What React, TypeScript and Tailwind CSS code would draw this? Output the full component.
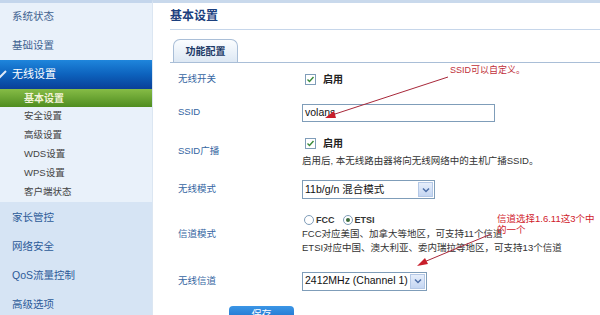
const SUB = ["安全设置", "高级设置", "WDS设置", "WPS设置", "客户端状态"];
const LOWER = ["家长管控", "网络安全", "QoS流量控制", "高级选项"];

function CheckBox() {
  return (
    <span className="flex h-[11px] w-[11px] items-center justify-center border border-[#7f9db9] bg-white">
      <svg width="9" height="9" viewBox="0 0 9 9" aria-hidden="true">
        <path d="M1.5 4.5l2 2 4-4.5" stroke="#3a8a3a" strokeWidth="1.4" fill="none" />
      </svg>
    </span>
  );
}

function Radio({ on }: { on: boolean }) {
  return (
    <span className="flex h-[10px] w-[10px] items-center justify-center rounded-full border border-[#7f9db9] bg-white">
      {on && <span className="h-[4px] w-[4px] rounded-full bg-[#3a6a3a]" />}
    </span>
  );
}

function Select({ label, width }: { label: string; width: string }) {
  return (
    <div className={`flex h-[19px] items-center justify-between overflow-hidden border border-[#7f9db9] bg-white pl-[2px] pr-[1px] ${width}`}>
      <span className="whitespace-nowrap text-[10.5px] text-[#111]">{label}</span>
      <span className="flex h-[15px] w-[15px] shrink-0 items-center justify-center border border-[#b4c8e6] bg-gradient-to-b from-[#e6eefb] to-[#c4d6f2]">
        <svg width="8" height="6" viewBox="0 0 8 6" aria-hidden="true">
          <path d="M1 1.5l3 3 3-3" stroke="#4d6fa8" strokeWidth="1.5" fill="none" />
        </svg>
      </span>
    </div>
  );
}

function Row({ label, h, children }: { label: string; h: string; children: React.ReactNode }) {
  return (
    <div className={`flex shrink-0 items-center ${h}`}>
      <span className="w-[124px] shrink-0 text-[9.5px] text-[#3566a2]">{label}</span>
      <div>{children}</div>
    </div>
  );
}

export default function App() {
  return (
    <div className="relative flex h-[315px] w-[600px] overflow-hidden bg-white font-['Liberation_Sans','Noto_Sans_CJK_SC',sans-serif]">
      {/* sidebar */}
      <aside className="flex w-[152px] shrink-0 flex-col border-t-[3px] border-[#c4d6ec] bg-[#e9f1fa]">
        <div className="flex h-[28px] shrink-0 items-center pl-[12px] text-[10.5px] text-[#3f6290]">系统状态</div>
        <div className="flex h-[29px] shrink-0 items-center pl-[12px] text-[10.5px] text-[#3f6290]">基础设置</div>
        <div className="flex h-[29px] shrink-0 items-center bg-gradient-to-b from-[#1f86dc] via-[#0d62bd] to-[#0a3f98] text-[11px] text-white">
          <svg width="12" height="10" viewBox="0 0 12 10" aria-hidden="true" className="-ml-[5px] mr-[5px]">
            <path d="M1 5l3 3 7-7" stroke="#dfe9f7" strokeWidth="2" fill="none" />
          </svg>
          无线设置
        </div>
        <div className="flex h-[18px] shrink-0 items-center bg-gradient-to-b from-[#86bc46] to-[#4f8d1f] pl-[24px] text-[10px] font-bold text-[#f3f3d8]">
          基本设置
        </div>
        {SUB.map((s) => (
          <div key={s} className="flex h-[19px] shrink-0 items-center pl-[24px] text-[9.5px] text-[#444]">
            {s}
          </div>
        ))}
        <div className="flex flex-1 flex-col bg-[#d6e4f4] pt-[1px]">
          {LOWER.map((s) => (
            <div key={s} className="flex h-[29px] shrink-0 items-center pl-[12px] text-[10.5px] text-[#2d5b98]">
              {s}
            </div>
          ))}
        </div>
      </aside>

      {/* main */}
      <main className="flex flex-1 flex-col border-l border-t-[3px] border-[#c9d9ec] border-l-[#dbe6f2]">
        <div className="ml-[17px] flex h-[27px] shrink-0 items-center border-b border-[#c6d6ea] text-[12px] font-bold text-[#1c3f7e]">
          基本设置
        </div>
        <div className="ml-[17px] mt-[9px] flex shrink-0 border-b border-[#a9bed7]">
          <div className="ml-[3px] flex h-[23px] w-[65px] items-center justify-center rounded-t-[7px] border border-b-0 border-[#a9bed7] bg-gradient-to-b from-[#fbfdff] to-[#dde8f4] text-[10px] font-bold text-[#1b3966]">
            功能配置
          </div>
        </div>

        <div className="ml-[25px] flex shrink-0 flex-col">
          <Row label="无线开关" h="h-[33px]">
            <div className="flex items-center gap-[7px] pl-[3px]">
              <CheckBox />
              <span className="text-[10px] font-bold text-[#222]">启用</span>
            </div>
          </Row>
          <Row label="SSID" h="h-[33px]">
            <div className="flex h-[18px] w-[193px] items-center border border-[#7f9db9] bg-white pl-[2px] text-[10.5px] text-[#111]">
              volans
            </div>
          </Row>
          <Row label="SSID广播" h="h-[44px]">
            <div className="flex flex-col gap-[3px] pt-[2px]">
              <div className="flex items-center gap-[7px] pl-[3px]">
                <CheckBox />
                <span className="text-[10px] font-bold text-[#222]">启用</span>
              </div>
              <span className="text-[9.5px] text-[#333]">启用后, 本无线路由器将向无线网络中的主机广播SSID。</span>
            </div>
          </Row>
          <Row label="无线模式" h="h-[33px]">
            <Select label="11b/g/n 混合模式" width="w-[133px]" />
          </Row>
          <Row label="信道模式" h="h-[56px]">
            <div className="flex flex-col text-[9.5px] leading-[14px] text-[#333]">
              <div className="flex items-center gap-[2px] pl-[2px]">
                <Radio on={false} />
                <span className="mr-[6px] text-[9px] font-bold">FCC</span>
                <Radio on={true} />
                <span className="text-[9px] font-bold">ETSI</span>
              </div>
              <span>FCC对应美国、加拿大等地区，可支持11个信道</span>
              <span>ETSI对应中国、澳大利亚、委内瑞拉等地区，可支持13个信道</span>
            </div>
          </Row>
          <Row label="无线信道" h="h-[38px]">
            <Select label="2412MHz (Channel 1)" width="w-[125px]" />
          </Row>
          <div className="ml-[51px] mt-[6px] flex h-[20px] w-[65px] shrink-0 items-start justify-center rounded-t-[4px] bg-gradient-to-b from-[#3b96e6] to-[#0f62c2] pt-[1px] text-[10px] text-white">
            保存
          </div>
        </div>
      </main>

      {/* annotations */}
      <span className="absolute left-[450px] top-[64px] text-[9px] text-[#c0303a]">SSID可以自定义。</span>
      <span className="absolute left-[497px] top-[213px] w-[104px] text-[9.5px] leading-[11px] text-[#d0202a]">
        信道选择1.6.11这3个中的一个
      </span>
      <svg className="pointer-events-none absolute left-0 top-0" width="600" height="315" aria-hidden="true">
        <line x1="448" y1="77" x2="332" y2="115" stroke="#a8283a" strokeWidth="1" />
        <path d="M325 118l9-7 2 7z" fill="#c81e2a" />
        <line x1="491" y1="234" x2="424" y2="262" stroke="#a8283a" strokeWidth="1" />
        <path d="M417 266l8-8 3 6z" fill="#c81e2a" />
      </svg>
    </div>
  );
}
